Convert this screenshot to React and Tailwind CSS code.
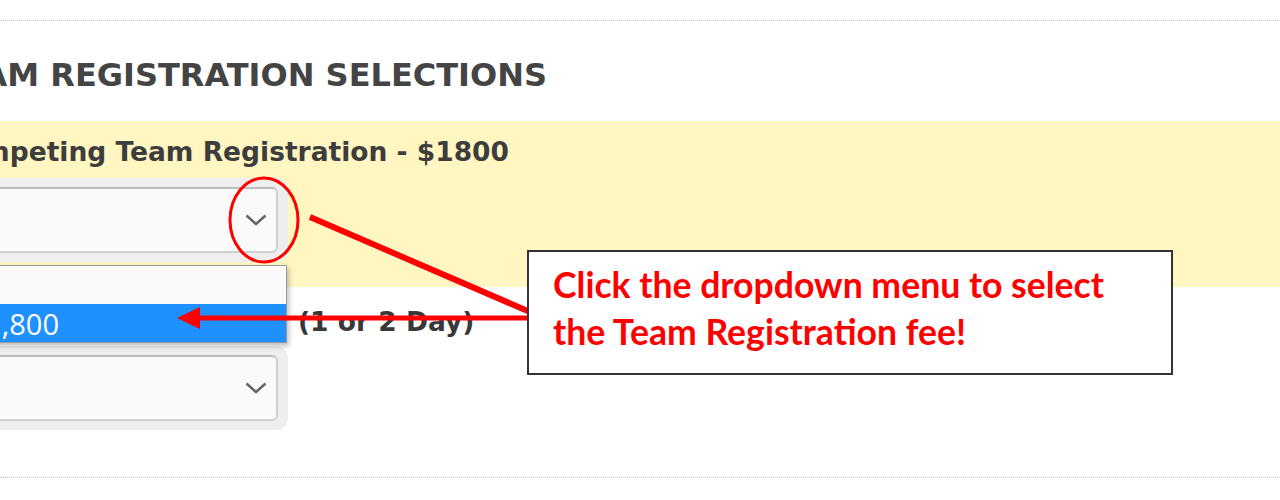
import React from "react";

const Chevron = () => (
  <svg width="22" height="12" viewBox="0 0 22 12" className="shrink-0">
    <polyline points="1.5,1.5 11,10 20.5,1.5" fill="none" stroke="#666" strokeWidth="2.5" />
  </svg>
);

const SelectBox = () => (
  <div className="-ml-[20px] w-[308px] rounded-r-[12px] bg-[#eeeeee] py-[9px] pr-[10px]">
    <div className="flex h-[66px] items-center justify-end rounded-[6px] border-2 border-[#cfcfcf] border-t-[#bdbdbd] bg-[#fafafa] pr-[9px]">
      <Chevron />
    </div>
  </div>
);

const App = () => {
  return (
    <div className="relative h-[500px] w-[1280px] overflow-hidden bg-white font-['DejaVu_Sans',sans-serif]">
      <div className="pt-[20px]">
        <div className="border-t border-dotted border-[#c8c8c8]" />

        {/* Section heading */}
        <div className="mt-[34px] flex w-[547px] justify-end">
          <h2 className="whitespace-nowrap text-[32px] font-bold leading-[40px] text-[#444444]">
            TEAM REGISTRATION SELECTIONS
          </h2>
        </div>

        {/* Competing team */}
        <div className="mt-[26px] bg-[#fff6c1] pb-[25px] pt-[15px]">
          <div className="flex w-[509px] justify-end">
            <p className="whitespace-nowrap text-[26.5px] font-bold leading-[32px] text-[#3d3d3d]">
              Competing Team Registration - $1800
            </p>
          </div>
          <div className="mt-[10px]">
            <SelectBox />
          </div>
        </div>

        {/* Second registration option */}
        <p className="mt-[19px] pl-[298px] text-[26.5px] font-bold leading-[32px] text-[#383838]">
          (1 or 2 Day)
        </p>
        <div className="mt-[8px]">
          <SelectBox />
        </div>

        <div className="mt-[47px] border-t border-dotted border-[#c8c8c8]" />
      </div>

      {/* Open dropdown list */}
      <div className="absolute left-[-20px] top-[265px] w-[307px] border border-[#9a9a9a] bg-[#fafafa] shadow-[2px_3px_5px_rgba(0,0,0,0.25)]">
        <div className="h-[38px]" />
        <div className="flex h-[38px] items-center bg-[#1e90ff]">
          <div className="flex w-[78px] justify-end">
            <span className="whitespace-nowrap font-['Open_Sans',sans-serif] text-[29px] leading-none text-white">
              $1,800
            </span>
          </div>
        </div>
      </div>

      {/* Annotation drawings */}
      <svg className="pointer-events-none absolute left-0 top-0" width="1280" height="500">
        <ellipse cx="264" cy="220" rx="34" ry="42" fill="none" stroke="#ff0000" strokeWidth="3" />
        <line x1="310" y1="217" x2="530" y2="312" stroke="#ff0000" strokeWidth="6" />
        <line x1="196" y1="318" x2="530" y2="318" stroke="#ff0000" strokeWidth="5" />
        <polygon points="177,318 200,307 200,329" fill="#ff0000" />
      </svg>

      {/* Callout */}
      <div className="absolute left-[527px] top-[250px] h-[125px] w-[646px] border-2 border-[#333333] bg-white pl-[24px] pt-[9px]">
        <p className="font-['Lato',sans-serif] text-[35.6px] font-bold leading-[47px] text-[#ff0000]">
          Click the dropdown menu to select
          <br />
          the Team Registration fee!
        </p>
      </div>
    </div>
  );
};

export default App;
